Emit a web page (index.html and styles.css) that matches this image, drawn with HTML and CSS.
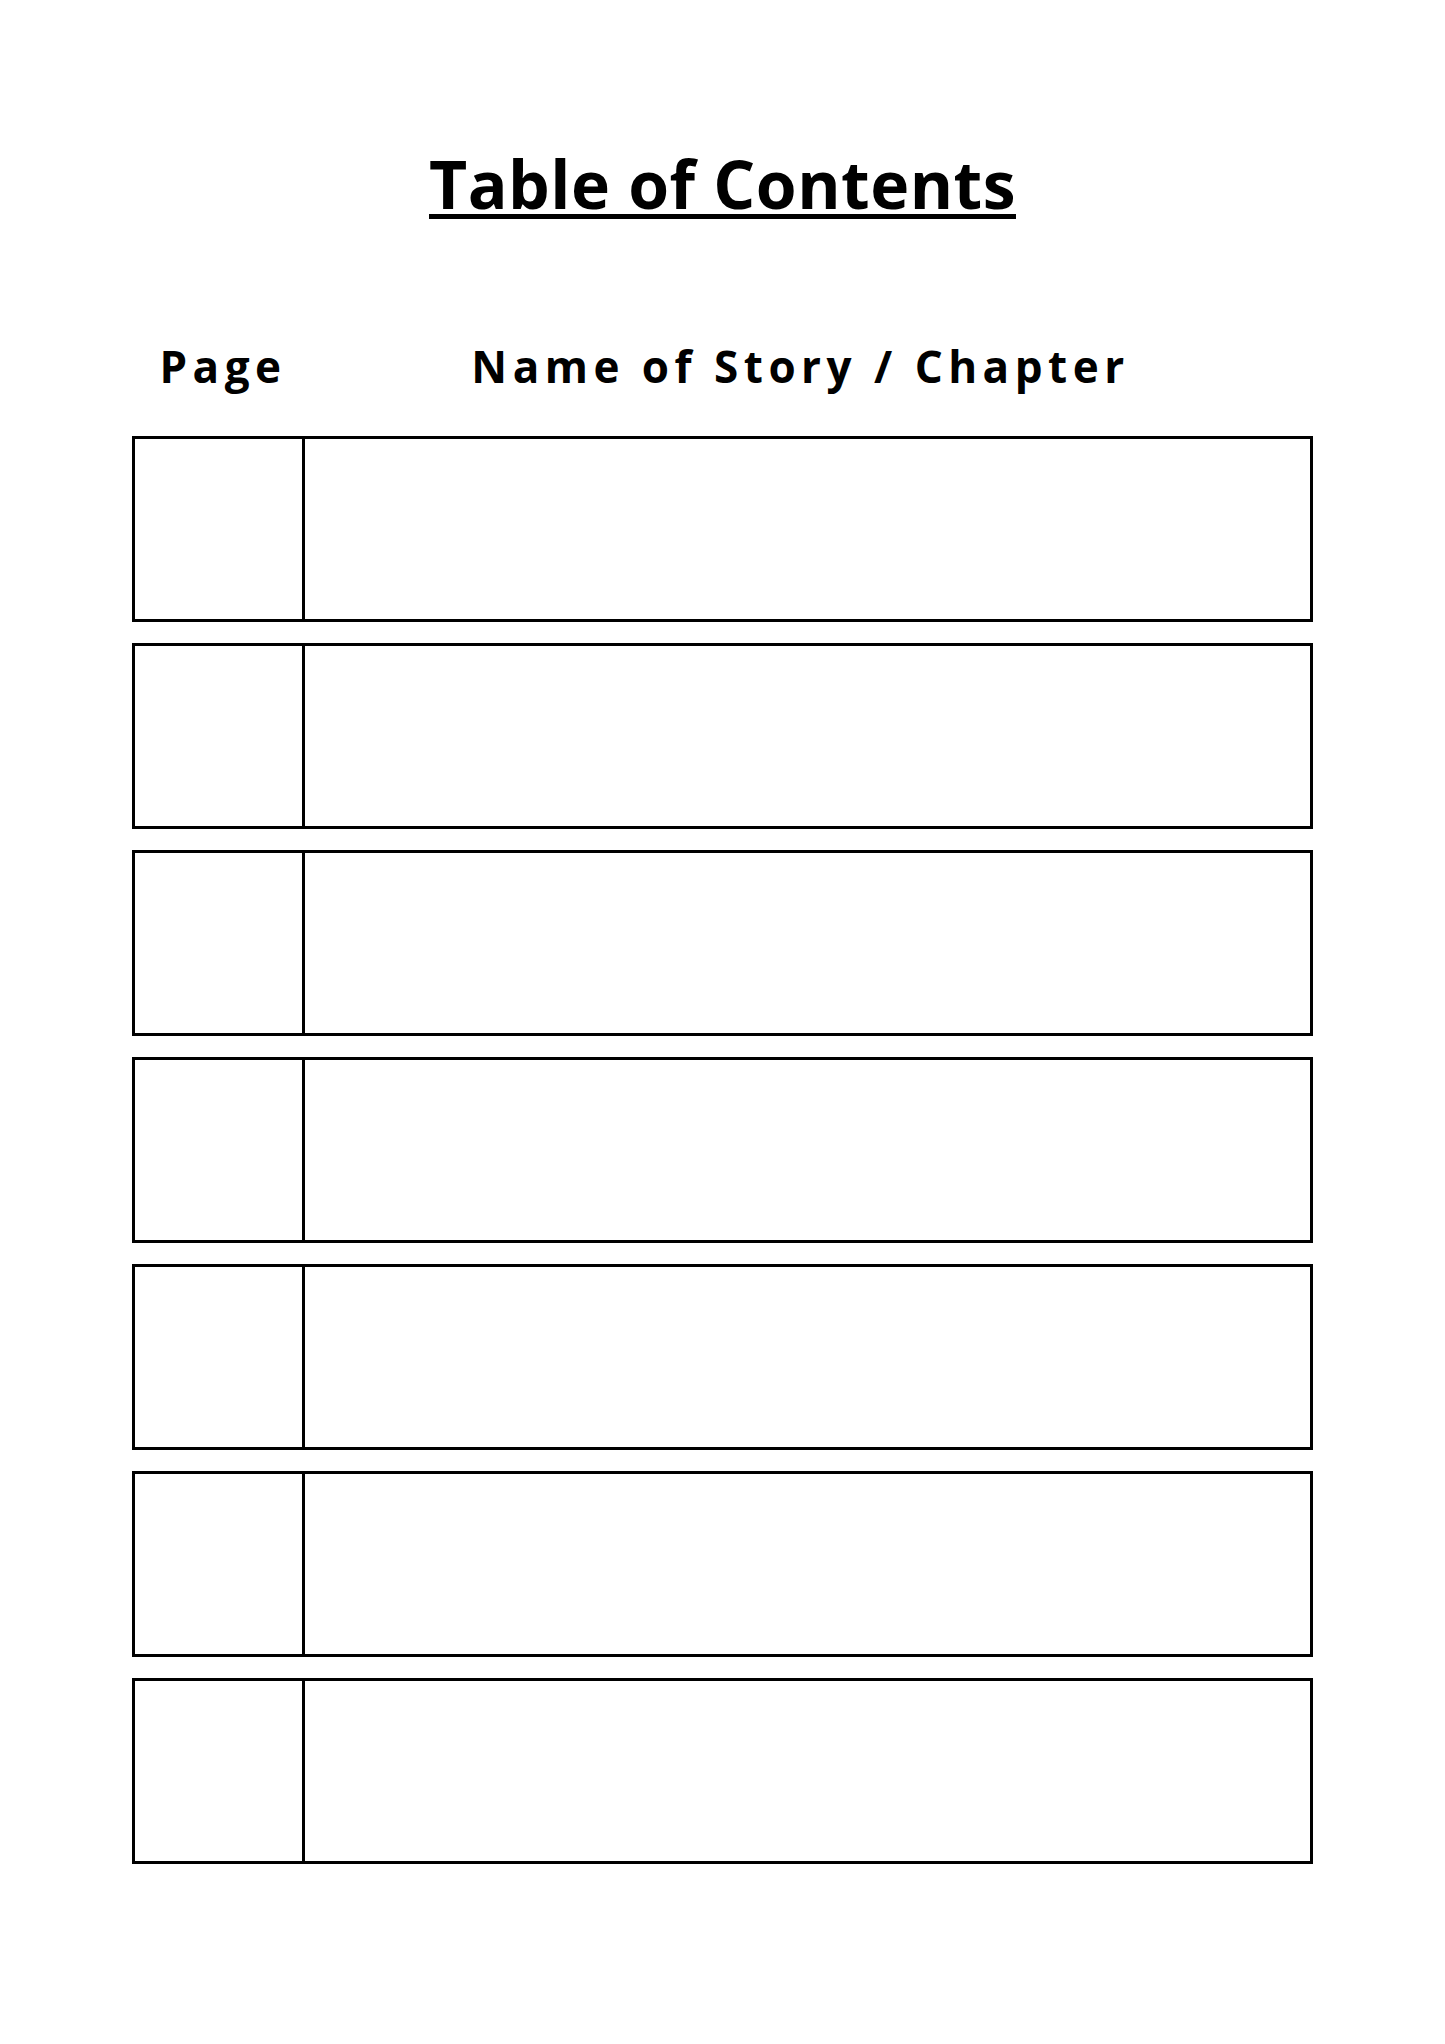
FILE: index.html
```html
<!DOCTYPE html>
<html lang="en">
<head>
<meta charset="utf-8">
<title>Table of Contents</title>
<link rel="stylesheet" href="styles.css">
</head>
<body>
<main class="sheet">
  <h1 class="title"><span class="title-text">Table of Contents</span></h1>
  <div class="heads">
    <div class="head head-page">Page</div>
    <div class="head head-name">Name of Story / Chapter</div>
  </div>
  <div class="rows">
    <div class="row"><div class="cell-page"></div><div class="cell-name"></div></div>
    <div class="row"><div class="cell-page"></div><div class="cell-name"></div></div>
    <div class="row"><div class="cell-page"></div><div class="cell-name"></div></div>
    <div class="row"><div class="cell-page"></div><div class="cell-name"></div></div>
    <div class="row"><div class="cell-page"></div><div class="cell-name"></div></div>
    <div class="row"><div class="cell-page"></div><div class="cell-name"></div></div>
    <div class="row"><div class="cell-page"></div><div class="cell-name"></div></div>
  </div>
</main>
</body>
</html>
```
FILE: styles.css
```css
html, body {
  margin: 0;
  padding: 0;
  background: #ffffff;
}
body {
  font-family: "Open Sans", "Noto Sans", sans-serif;
  color: #000000;
}
.sheet {
  width: 1181px;
  margin: 0 0 0 132px;
  padding-top: 150px;
}
.title {
  margin: 0 -132px;
  width: 1445px;
  font-size: 66px;
  line-height: 1;
  font-weight: 700;
  text-align: center;
}
.title-text {
  letter-spacing: 0.5px;
  text-decoration: underline;
  text-decoration-thickness: 5px;
  text-underline-offset: 5px;
}
.heads {
  display: grid;
  grid-template-columns: 176px 1fr;
  margin-top: 128px;
}
.head {
  font-size: 44px;
  line-height: 1;
  font-weight: 700;
  letter-spacing: 5.5px;
  text-align: center;
}
.head-page {
  padding-left: 6px;
}
.head-name {
  padding-right: 20px;
}
.rows {
  display: flex;
  flex-direction: column;
  gap: 21px;
  margin-top: 48px;
}
.row {
  display: grid;
  grid-template-columns: 170px 1fr;
  height: 186px;
  box-sizing: border-box;
  border: 3px solid #000;
}
.cell-page {
  border-right: 3px solid #000;
}
```
